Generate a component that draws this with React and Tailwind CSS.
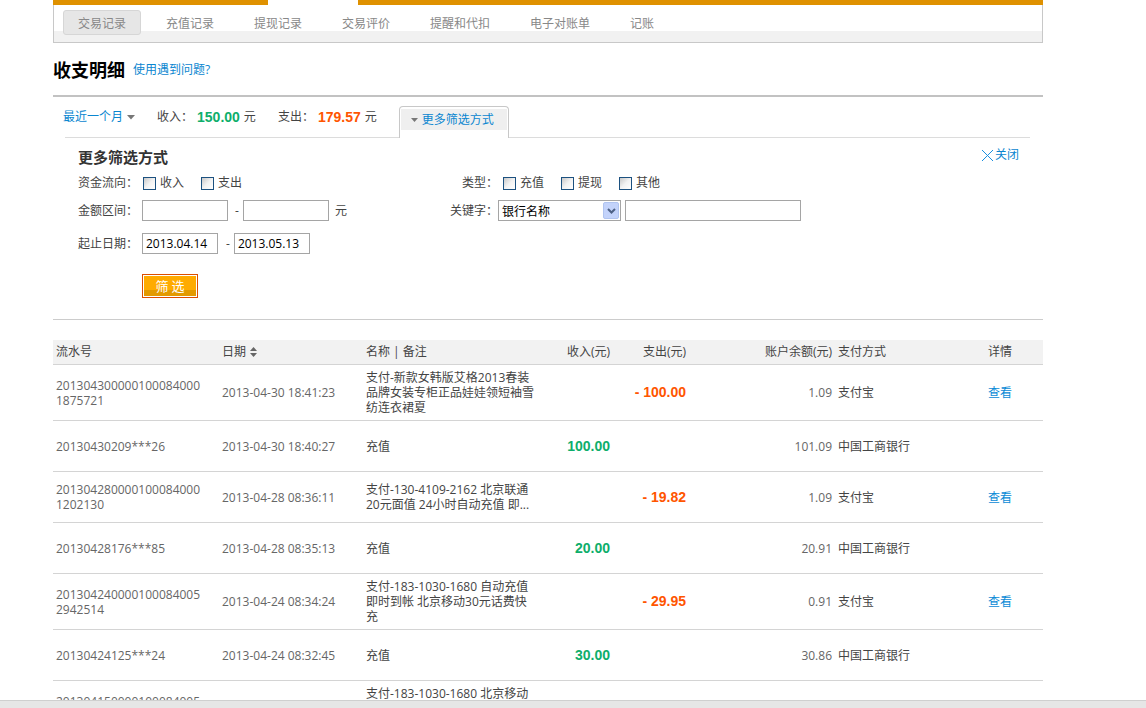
import React from 'react';

const rows = [
  { id: ['201304300000100084000', '1875721'], date: '2013-04-30 18:41:23', name: ['支付-新款女韩版艾格2013春装', '品牌女装专柜正品娃娃领短袖雪', '纺连衣裙夏'], out: '100.00', bal: '1.09', method: '支付宝', detail: true },
  { id: ['20130430209***26'], date: '2013-04-30 18:40:27', name: ['充值'], inc: '100.00', bal: '101.09', method: '中国工商银行' },
  { id: ['201304280000100084000', '1202130'], date: '2013-04-28 08:36:11', name: ['支付-130-4109-2162 北京联通', '20元面值 24小时自动充值 即...'], out: '19.82', bal: '1.09', method: '支付宝', detail: true },
  { id: ['20130428176***85'], date: '2013-04-28 08:35:13', name: ['充值'], inc: '20.00', bal: '20.91', method: '中国工商银行' },
  { id: ['201304240000100084005', '2942514'], date: '2013-04-24 08:34:24', name: ['支付-183-1030-1680 自动充值', '即时到帐 北京移动30元话费快', '充'], out: '29.95', bal: '0.91', method: '支付宝', detail: true },
  { id: ['20130424125***24'], date: '2013-04-24 08:32:45', name: ['充值'], inc: '30.00', bal: '30.86', method: '中国工商银行' },
  { id: ['201304150000100084005', '2942513'], date: '2013-04-15 10:12:08', name: ['支付-183-1030-1680 北京移动', '30元话费快充 即时到帐 自动', '充值'], out: '29.95', bal: '30.86', method: '支付宝', detail: true },
];

const tabs = ['交易记录', '充值记录', '提现记录', '交易评价', '提醒和代扣', '电子对账单', '记账'];

function Box({ className = '' }) {
  return <span className={'inline-block w-[13px] h-[13px] shrink-0 border border-[#1c5180] bg-linear-to-br from-[#c8c8c8] via-[#f2f2f2] to-white ' + className} />;
}

const GRID = 'grid grid-cols-[167px_144px_172px_77px_76px_146px_150px_58px]';

export default function App() {
  return (
    <div className="h-[708px] overflow-hidden flex flex-col bg-white font-['Open_Sans','Noto_Sans_CJK_SC',sans-serif] text-[12px] text-[#444]">
      <div className="flex-1 overflow-hidden">
        <div className="ml-[53px] w-[990px]">
          {/* top orange strip */}
          <div className="flex h-[5px]">
            <div className="w-[215px] bg-[#df9100]" />
            <div className="w-[90px] bg-white" />
            <div className="flex-1 bg-[#df9100]" />
          </div>
          {/* tabs box */}
          <div className="h-[38px] border-x border-b border-[#c8c8c8] bg-[linear-gradient(#fff_26px,#f1f1f1_26px)] pt-[5px] pl-[9px] flex gap-[10px] items-start">
            {tabs.map((t, i) =>
              i === 0 ? (
                <div key={t} className="h-[25px] px-[14px] flex items-center border border-[#d6d6d6] rounded-[3px] bg-[#e6e6e6] text-[#888] font-['Noto_Sans_CJK_SC',sans-serif]">{t}</div>
              ) : (
                <div key={t} className="h-[25px] px-[15px] flex items-center text-[#888] font-['Noto_Sans_CJK_SC',sans-serif]">{t}</div>
              )
            )}
          </div>
          {/* heading */}
          <div className="h-[52px] flex items-center">
            <span className="text-[18px] font-bold text-black leading-none font-['Noto_Sans_CJK_SC',sans-serif]">收支明细</span>
            <span className="ml-[8px] text-[#0a86d0] mt-[2px]">使用遇到问题?</span>
          </div>
          <div className="h-[2px] bg-[#c2c2c2]" />
          {/* summary row */}
          <div className="flex items-center h-[40px] pl-[10px]">
            <span className="text-[#0a86d0]">最近一个月</span>
            <svg className="ml-[4px]" width="8" height="5" viewBox="0 0 8 5"><path d="M0 0 H8 L4 4.5 Z" fill="#777" /></svg>
            <span className="ml-[22px]">收入：</span>
            <span className="ml-[4px] font-['Liberation_Sans',sans-serif] font-bold text-[14px] text-[#0eae6b]">150.00</span>
            <span className="ml-[4px]">元</span>
            <span className="ml-[22px]">支出：</span>
            <span className="ml-[4px] font-['Liberation_Sans',sans-serif] font-bold text-[14px] text-[#ff5500]">179.57</span>
            <span className="ml-[4px]">元</span>
            <div className="ml-[22px] self-end relative z-10 -mb-px h-[32px] w-[110px] border border-b-0 border-[#c8c8c8] rounded-t-[4px] bg-white px-[1px] pt-[2px]">
              <div className="h-[21px] bg-[#efefef] flex items-center pl-[10px] text-[#0a86d0]">
                <svg width="7" height="4" viewBox="0 0 7 4"><path d="M0 0 H7 L3.5 4 Z" fill="#777" /></svg>
                <span className="ml-[4px]">更多筛选方式</span>
              </div>
            </div>
          </div>
          <div className="h-px bg-[#dcdcdc] ml-[12px] w-[965px]" />
          {/* filter panel */}
          <div className="pl-[25px] pr-[24px]">
            <div className="flex items-center justify-between h-[20px] mt-[9px]">
              <span className="text-[15px] font-bold text-[#333] font-['Noto_Sans_CJK_SC',sans-serif]">更多筛选方式</span>
              <span className="flex items-center text-[#0a86d0] -mt-[4px]">
                <svg width="13" height="13" viewBox="0 0 13 13"><path d="M1 1 L12 12 M12 1 L1 12" stroke="#1a8fe0" strokeWidth="1" fill="none" /></svg>
                <span className="ml-[1px]">关闭</span>
              </span>
            </div>
            <div className="flex mt-[6px] h-[20px] items-center">
              <div className="w-[371px] flex items-center">
                <span className="w-[65px]">资金流向：</span>
                <Box />
                <span className="ml-[4px]">收入</span>
                <Box className="ml-[17px]" />
                <span className="ml-[4px]">支出</span>
              </div>
              <div className="flex items-center">
                <span className="w-[49px] text-right">类型：</span>
                <Box className="ml-[5px]" />
                <span className="ml-[4px]">充值</span>
                <Box className="ml-[17px]" />
                <span className="ml-[4px]">提现</span>
                <Box className="ml-[17px]" />
                <span className="ml-[4px]">其他</span>
              </div>
            </div>
            <div className="flex mt-[7px] h-[21px] items-center">
              <div className="w-[371px] flex items-center">
                <span className="w-[64px]">金额区间：</span>
                <div className="w-[86px] h-[21px] border border-[#a5a5a5] bg-white" />
                <span className="ml-[7px]">-</span>
                <div className="ml-[4px] w-[86px] h-[21px] border border-[#a5a5a5] bg-white" />
                <span className="ml-[6px]">元</span>
              </div>
              <div className="flex items-center">
                <span className="w-[49px] text-right">关键字：</span>
                <div className="w-[123px] h-[21px] border border-[#a5a5a5] bg-white flex items-center pl-[3px] text-black">
                  <span className="flex-1 font-['Noto_Sans_CJK_SC',sans-serif]">银行名称</span>
                  <span className="w-[16px] h-[17px] mr-[1px] rounded-[2px] bg-[#c3d3fb] border border-[#b0c4f0] flex items-center justify-center">
                    <svg width="9" height="6" viewBox="0 0 9 6"><path d="M1 1 L4.5 4.5 L8 1" stroke="#4d6185" strokeWidth="2" fill="none" /></svg>
                  </span>
                </div>
                <div className="ml-[4px] w-[176px] h-[21px] border border-[#a5a5a5] bg-white" />
              </div>
            </div>
            <div className="flex mt-[12px] h-[21px] items-center">
              <span className="w-[64px]">起止日期：</span>
              <div className="w-[76px] h-[21px] border border-[#a5a5a5] bg-white pl-[3px] flex items-center text-black">2013.04.14</div>
              <span className="ml-[8px]">-</span>
              <div className="ml-[4px] w-[76px] h-[21px] border border-[#a5a5a5] bg-white pl-[3px] flex items-center text-black">2013.05.13</div>
            </div>
            <div className="ml-[64px] mt-[20px] w-[56px] h-[24px] border border-[#dc4f00] p-px">
              <div className="w-full h-full bg-[linear-gradient(#ffab00_68%,#e39a00_68%)] flex items-center justify-center text-white text-[13px] tracking-[3px] pl-[3px] font-['Noto_Sans_CJK_SC',sans-serif]">筛选</div>
            </div>
          </div>
          <div className="mt-[21px] h-px bg-[#cccccc]" />
          {/* table */}
          <div className="mt-[20px]">
            <div className={GRID + ' h-[25px] bg-[#f2f2f2] border-b border-[#d4d4d4] items-center text-[#444]'}>
              <div className="pl-[3px]">流水号</div>
              <div className="pl-[2px] flex items-center">
                日期
                <svg className="ml-[4px]" width="7" height="10" viewBox="0 0 7 10"><path d="M3.5 0 L7 4 H0 Z M0 6 H7 L3.5 10 Z" fill="#666" /></svg>
              </div>
              <div className="pl-[2px]">名称 | 备注</div>
              <div className="pr-[3px] text-right">收入(元)</div>
              <div className="pr-[3px] text-right">支出(元)</div>
              <div className="pr-[3px] text-right">账户余额(元)</div>
              <div className="pl-[3px]">支付方式</div>
              <div className="pl-[3px]">详情</div>
            </div>
            {rows.map((r, i) => (
              <div key={i} className={GRID + ' items-center min-h-[51px] py-[5px] border-b border-[#d4d4d4] leading-[15px]'}>
                <div className="pl-[3px] text-[#666]">
                  {r.id.map((l) => (
                    <div key={l} className="whitespace-nowrap">{l}</div>
                  ))}
                </div>
                <div className="pl-[2px] text-[#666] whitespace-nowrap">{r.date}</div>
                <div className="pl-[2px] text-[#444]">
                  {r.name.map((l) => (
                    <div key={l} className="whitespace-nowrap">{l}</div>
                  ))}
                </div>
                <div className="pr-[3px] text-right font-['Liberation_Sans',sans-serif] font-bold text-[14px] text-[#0eae6b]">{r.inc || ''}</div>
                <div className="pr-[3px] text-right font-['Liberation_Sans',sans-serif] font-bold text-[14px] text-[#ff5500]">{r.out ? '- ' + r.out : ''}</div>
                <div className="pr-[3px] text-right text-[#666]">{r.bal}</div>
                <div className="pl-[3px] text-[#444]">{r.method}</div>
                <div className="pl-[3px] text-[#0a8ad6]">{r.detail ? '查看' : ''}</div>
              </div>
            ))}
          </div>
        </div>
      </div>
      <div className="h-[8px] shrink-0 border-t border-[#cfcfcf] bg-[#e6e6e6]" />
    </div>
  );
}
